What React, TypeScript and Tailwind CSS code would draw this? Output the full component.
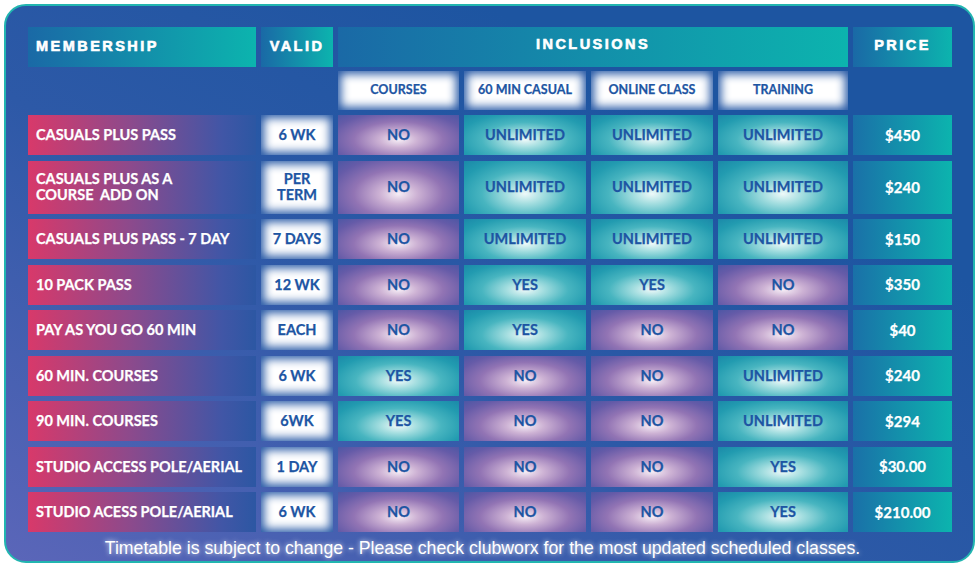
const cols = 'grid grid-cols-[228px_72px_121px_122px_122px_130px_99px] gap-x-[5px] shrink-0'

const rows = [
  { name: ['CASUALS PLUS PASS'], valid: ['6 WK'], inc: ['NO', 'UNLIMITED', 'UNLIMITED', 'UNLIMITED'], price: '$450', tall: false },
  { name: ['CASUALS PLUS AS A', 'COURSE\u00a0 ADD ON'], valid: ['PER', 'TERM'], inc: ['NO', 'UNLIMITED', 'UNLIMITED', 'UNLIMITED'], price: '$240', tall: true },
  { name: ['CASUALS PLUS PASS - 7 DAY'], valid: ['7 DAYS'], inc: ['NO', 'UMLIMITED', 'UNLIMITED', 'UNLIMITED'], price: '$150', tall: false },
  { name: ['10 PACK PASS'], valid: ['12 WK'], inc: ['NO', 'YES', 'YES', 'NO'], price: '$350', tall: false },
  { name: ['PAY AS YOU GO 60 MIN'], valid: ['EACH'], inc: ['NO', 'YES', 'NO', 'NO'], price: '$40', tall: false },
  { name: ['60 MIN. COURSES'], valid: ['6 WK'], inc: ['YES', 'NO', 'NO', 'UNLIMITED'], price: '$240', tall: false },
  { name: ['90 MIN. COURSES'], valid: ['6WK'], inc: ['YES', 'NO', 'NO', 'UNLIMITED'], price: '$294', tall: false },
  { name: ['STUDIO ACCESS POLE/AERIAL'], valid: ['1 DAY'], inc: ['NO', 'NO', 'NO', 'YES'], price: '$30.00', tall: false },
  { name: ['STUDIO ACESS POLE/AERIAL'], valid: ['6 WK'], inc: ['NO', 'NO', 'NO', 'YES'], price: '$210.00', tall: false },
]

// heading cells: teal gradient, heavy spaced caps
const headCell =
  'flex items-center bg-[linear-gradient(to_right,#1a69a6,#0cb4ae)] text-white font-["Liberation_Sans",sans-serif] font-bold text-[14.5px] tracking-[0.17em] [-webkit-text-stroke:0.6px_white]'

const glowWhite = 'bg-white shadow-[inset_0_0_10px_3px_#2658a5]'

const noCell =
  'bg-[radial-gradient(ellipse_at_50%_62%,#f6eef6_0%,#cdb2d4_22%,#9274b4_52%,#655ba8_80%,#4d57a5_100%)]'
const yesCell =
  'bg-[radial-gradient(ellipse_at_50%_62%,#eef9f9_0%,#a2dddf_22%,#48b5c0_50%,#229bb0_78%,#1b89a9_100%)]'

const cellText = 'text-[#1d55a3] font-bold [-webkit-text-stroke:0.25px_#1d55a3]'

const App = () => {
  return (
    <div className="w-[978px] h-[567px] bg-white pl-[4px] pr-[3px] pt-[4px] pb-[4px] font-['Lato',sans-serif]">
      <div className="h-full overflow-hidden rounded-[22px] border-2 border-[#22b5b0] bg-[linear-gradient(to_top_right,#5b66b9,#2d59a7_42%,#1d55a1_75%)] pl-[22px] pt-[21px] flex flex-col">
        {/* header */}
        <div className={`${cols} h-[40px]`}>
          <div className={`${headCell} pl-[8px]`}>MEMBERSHIP</div>
          <div className={`${headCell} justify-center`}>VALID</div>
          <div className={`${headCell} col-span-4 justify-center pb-[4px]`}>INCLUSIONS</div>
          <div className={`${headCell} justify-center pb-[2px]`}>PRICE</div>
        </div>

        <div className={`${cols} h-[39px] mt-[4px]`}>
          <div />
          <div />
          {['COURSES', '60 MIN CASUAL', 'ONLINE CLASS', 'TRAINING'].map((label) => (
            <div
              key={label}
              className={`${glowWhite} ${cellText} flex items-center justify-center text-[12.5px]`}
            >
              {label}
            </div>
          ))}
          <div />
        </div>

        {/* body */}
        <div className="flex flex-col gap-y-[5.5px] mt-[5px] shrink-0">
          {rows.map((row, i) => (
            <div key={i} className={`${cols} ${row.tall ? 'h-[53px]' : 'h-[40px]'}`}>
              <div className="flex flex-col justify-center pl-[8px] bg-[linear-gradient(to_right,#d8396a,#8c4a8c_45%,#4156a6_85%,#2c57a3)] text-white font-bold text-[14.5px] leading-[16px] [-webkit-text-stroke:0.25px_white]">
                {row.name.map((line) => (
                  <span key={line}>{line}</span>
                ))}
              </div>
              <div className={`${glowWhite} ${cellText} flex flex-col items-center justify-center text-[14.5px] leading-[16px]`}>
                {row.valid.map((line) => (
                  <span key={line}>{line}</span>
                ))}
              </div>
              {row.inc.map((v, j) => (
                <div
                  key={j}
                  className={`${v === 'NO' ? noCell : yesCell} ${cellText} flex items-center justify-center text-[14.5px]`}
                >
                  {v}
                </div>
              ))}
              <div className="flex items-center justify-center bg-[linear-gradient(to_right,#1a70a8,#0cb4ae)] text-white font-bold text-[15px] [-webkit-text-stroke:0.25px_white]">
                {row.price}
              </div>
            </div>
          ))}
        </div>

        <p className="shrink-0 mt-[6px] pr-[36px] leading-[20px] text-center text-white text-[17.7px] font-['Liberation_Sans',sans-serif] [text-shadow:0_0_5px_rgba(255,255,255,0.9)]">
          Timetable is subject to change - Please check clubworx for the most updated scheduled classes.
        </p>
      </div>
    </div>
  )
}

export default App
